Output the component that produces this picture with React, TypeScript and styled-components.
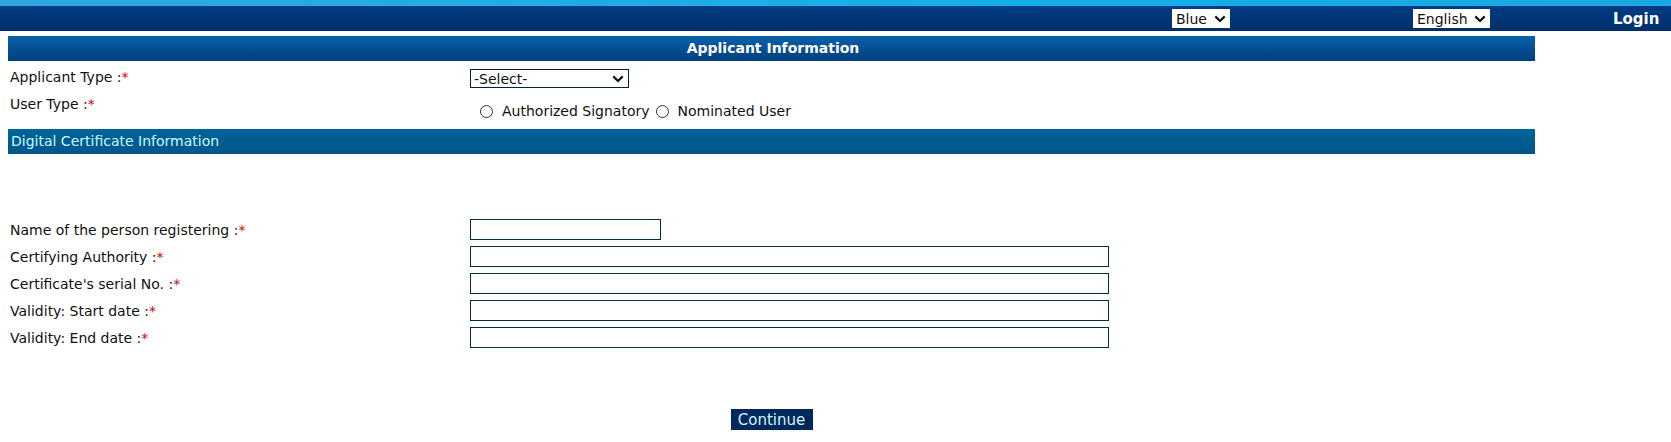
import styled, { createGlobalStyle } from "styled-components";

const GlobalStyle = createGlobalStyle`
  body {
    margin: 0;
    background: #fff;
    font-family: "DejaVu Sans", Verdana, sans-serif;
    font-size: 14px;
    color: #111;
  }
`;

const TopStrip = styled.div`
  height: 6px;
  background: linear-gradient(to right, #2ea6de, #14b0ea 60%, #1aa8e2);
`;

const NavBar = styled.div`
  height: 25px;
  display: grid;
  grid-template-columns: 241px 200px 1fr;
  align-items: center;
  padding-left: 1172px;
  background: linear-gradient(#003c84, #002f6b);
`;

const NavSelectBox = styled.div<{ $w: number }>`
  position: relative;
  width: ${(p) => p.$w}px;
  height: 19px;
  background: #fff;
`;

const NavSelect = styled.select`
  appearance: none;
  width: 100%;
  height: 100%;
  border: none;
  background: transparent;
  padding: 0 0 0 4px;
  font-family: "DejaVu Sans", Verdana, sans-serif;
  font-size: 14px;
  color: #111;
  outline: none;
`;

const Chevron = styled.svg`
  position: absolute;
  right: 4px;
  top: 50%;
  margin-top: -4px;
  width: 12px;
  height: 8px;
  pointer-events: none;
`;

const LoginLink = styled.span`
  color: #fff;
  font-weight: bold;
  font-size: 15px;
`;

const Main = styled.div`
  width: 1527px;
  margin: 5px 0 0 8px;
`;

const SectionHeader = styled.div<{ $variant: "primary" | "secondary" }>`
  height: 25px;
  line-height: 25px;
  padding-left: 3px;
  font-size: 14px;
  ${(p) =>
    p.$variant === "primary"
      ? `
    text-align: center;
    font-weight: bold;
    color: #fff;
    background: linear-gradient(#0b62a8, #044c90 60%, #003f80);
  `
      : `
    color: #c6fbff;
    background: linear-gradient(#00649a, #005489);
  `}
`;

const TopGrid = styled.div`
  display: grid;
  grid-template-columns: 462px 1fr;
  padding-top: 8px;
`;

const Label = styled.div<{ $pad?: number }>`
  line-height: 16px;
  padding-left: 2px;
  padding-top: ${(p) => p.$pad ?? 0}px;
`;

const Required = styled.span`
  color: #d40000;
`;

const TypeSelectBox = styled.div`
  position: relative;
  width: 159px;
  height: 19px;
  border: 1px solid #00213f;
  box-sizing: border-box;
`;

const TypeSelect = styled.select`
  appearance: none;
  width: 100%;
  height: 100%;
  border: none;
  background: #fff;
  padding: 0 0 0 3px;
  font-family: "DejaVu Sans", Verdana, sans-serif;
  font-size: 14px;
  color: #111;
  outline: none;
`;

const RadioGroup = styled.div`
  display: flex;
  align-items: center;
  padding: 15px 0 0 10px;
  height: 16px;
  margin-bottom: 10px;
`;

const RadioOption = styled.label`
  display: flex;
  align-items: center;
  margin-right: 6px;
`;

const Radio = styled.input`
  appearance: none;
  width: 13px;
  height: 13px;
  margin: 0 9px 0 0;
  border: 1px solid #333;
  border-radius: 50%;
  background: #fff;
`;

const Spacer = styled.div<{ $h: number }>`
  height: ${(p) => p.$h}px;
`;

const FieldRow = styled.div`
  display: grid;
  grid-template-columns: 462px 1fr;
  align-items: center;
  height: 27px;
`;

const TextBox = styled.input<{ $w: number }>`
  width: ${(p) => p.$w}px;
  height: 21px;
  box-sizing: border-box;
  border: 1px solid #00303e;
  margin: 0;
  padding: 0 3px;
  font-family: "DejaVu Sans", Verdana, sans-serif;
  font-size: 14px;
  outline: none;
`;

const ButtonRow = styled.div`
  display: flex;
  justify-content: center;
  padding-top: 58px;
`;

const ContinueButton = styled.button`
  width: 82px;
  height: 21px;
  border: none;
  padding: 0;
  background: #00285a;
  color: #d4f6ff;
  font-family: "DejaVu Sans", Verdana, sans-serif;
  font-size: 15px;
`;

const ChevronIcon = () => (
  <Chevron viewBox="0 0 12 8">
    <path d="M1.3 1.4 L6 6 L10.7 1.4" fill="none" stroke="#111" strokeWidth="2.2" />
  </Chevron>
);

const fields = [
  { label: "Name of the person registering :", width: 191 },
  { label: "Certifying Authority :", width: 639 },
  { label: "Certificate's serial No. :", width: 639 },
  { label: "Validity: Start date :", width: 639 },
  { label: "Validity: End date :", width: 639 },
];

export default function App() {
  return (
    <>
      <GlobalStyle />
      <TopStrip />
      <NavBar>
        <NavSelectBox $w={58}>
          <NavSelect defaultValue="Blue">
            <option>Blue</option>
          </NavSelect>
          <ChevronIcon />
        </NavSelectBox>
        <NavSelectBox $w={77}>
          <NavSelect defaultValue="English">
            <option>English</option>
          </NavSelect>
          <ChevronIcon />
        </NavSelectBox>
        <LoginLink>Login</LoginLink>
      </NavBar>
      <Main>
        <SectionHeader $variant="primary">Applicant Information</SectionHeader>
        <TopGrid>
          <Label $pad={0}>
            Applicant Type :<Required>*</Required>
          </Label>
          <TypeSelectBox>
            <TypeSelect defaultValue="">
              <option value="">-Select-</option>
            </TypeSelect>
            <ChevronIcon />
          </TypeSelectBox>
          <Label $pad={8}>
            User Type :<Required>*</Required>
          </Label>
          <RadioGroup>
            <RadioOption>
              <Radio type="radio" name="usertype" />
              Authorized Signatory
            </RadioOption>
            <RadioOption>
              <Radio type="radio" name="usertype" />
              Nominated User
            </RadioOption>
          </RadioGroup>
        </TopGrid>
        <SectionHeader $variant="secondary">Digital Certificate Information</SectionHeader>
        <Spacer $h={62} />
        {fields.map((f) => (
          <FieldRow key={f.label}>
            <Label>
              {f.label}
              <Required>*</Required>
            </Label>
            <TextBox type="text" $w={f.width} />
          </FieldRow>
        ))}
        <ButtonRow>
          <ContinueButton>Continue</ContinueButton>
        </ButtonRow>
      </Main>
    </>
  );
}
